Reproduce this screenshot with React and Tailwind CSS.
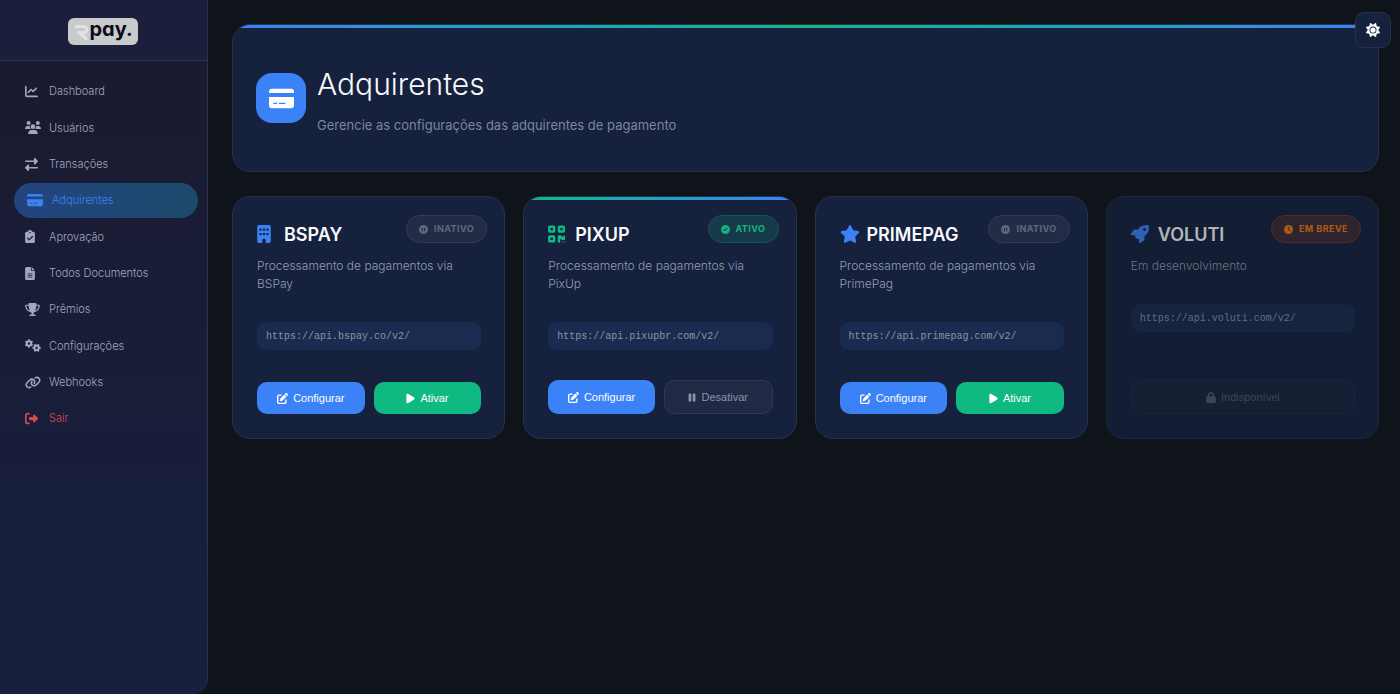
import {
  FaBuilding,
  FaChartLine,
  FaCircleCheck,
  FaCirclePause,
  FaClipboardCheck,
  FaClock,
  FaCreditCard,
  FaFileLines,
  FaGears,
  FaLink,
  FaLock,
  FaPause,
  FaPenToSquare,
  FaPlay,
  FaQrcode,
  FaRightFromBracket,
  FaRightLeft,
  FaRocket,
  FaStar,
  FaSun,
  FaTrophy,
  FaUsers,
} from "react-icons/fa6";
import clsx from "clsx";

const menu = [
  { label: "Dashboard", icon: FaChartLine, size: "size-[13px]" },
  { label: "Usuários", icon: FaUsers, size: "h-[13px] w-4" },
  { label: "Transações", icon: FaRightLeft, size: "size-[13px]" },
  { label: "Adquirentes", icon: FaCreditCard, size: "h-[14px] w-4", active: true },
  { label: "Aprovação", icon: FaClipboardCheck, size: "h-[13px] w-2.5" },
  { label: "Todos Documentos", icon: FaFileLines, size: "h-[13px] w-2.5" },
  { label: "Prêmios", icon: FaTrophy, size: "h-[13px] w-[15px]" },
  { label: "Configurações", icon: FaGears, size: "h-[13px] w-4" },
  { label: "Webhooks", icon: FaLink, size: "h-[13px] w-4" },
  { label: "Sair", icon: FaRightFromBracket, size: "size-[13px]", danger: true },
];

const acquirers = [
  {
    name: "BSPAY",
    icon: FaBuilding,
    size: "h-[18px] w-3.5",
    description: "Processamento de pagamentos via BSPay",
    url: "https://api.bspay.co/v2/",
    status: "inactive",
  },
  {
    name: "PIXUP",
    icon: FaQrcode,
    size: "h-5 w-[17px]",
    description: "Processamento de pagamentos via PixUp",
    url: "https://api.pixupbr.com/v2/",
    status: "active",
  },
  {
    name: "PRIMEPAG",
    icon: FaStar,
    size: "h-[18px] w-5",
    description: "Processamento de pagamentos via PrimePag",
    url: "https://api.primepag.com/v2/",
    status: "inactive",
  },
  {
    name: "VOLUTI",
    icon: FaRocket,
    size: "size-[18px]",
    description: "Em desenvolvimento",
    url: "https://api.voluti.com/v2/",
    status: "soon",
  },
];

const badges = {
  inactive: {
    label: "INATIVO",
    icon: FaCirclePause,
    style: "bg-[#232c47] border-[#343d55] text-[#5f687c]",
  },
  active: {
    label: "ATIVO",
    icon: FaCircleCheck,
    style: "bg-[#163a4a] border-[#165451] text-[#12b481]",
  },
  soon: {
    label: "EM BREVE",
    icon: FaClock,
    style: "bg-[#3b2c37] border-[#6b3a2c] text-[#f0761a]",
  },
};

const Logo = () => (
  <a
    href="#"
    aria-label="Rpay"
    className="flex h-[27px] w-[70px] items-center rounded-md bg-[#c9cacb] pl-1.5"
  >
    <svg viewBox="0 0 16 17" className="mt-0.5 h-[17px] w-4 shrink-0" fill="none" stroke="#e2e2e3" strokeWidth="3">
      <path d="M1 2.500h9a3 3 0 0 1 0 6H3" />
      <path d="M5 8.500 13 15.500" />
    </svg>
    <span className="-mt-1 text-[20px] leading-6 font-bold text-[#0b0a1e] [font-feature-settings:'cv11','ss03']">
      pay.
    </span>
  </a>
);

const Sidebar = () => (
  <aside className="w-52 shrink-0 overflow-hidden rounded-br-2xl border-r border-[#2a3350] bg-linear-to-b from-[#1a1a2e] via-[#191d38] to-[#16213e]">
    <div className="flex h-[61px] items-center justify-center border-b border-[#2a3350] bg-[#1c1f3b] pt-0.5 pr-0.5">
      <Logo />
    </div>
    <nav className="mt-[13px] flex h-[362px] flex-col justify-between">
      {menu.map(({ label, icon: Icon, size, active, danger }) => (
        <a
          key={label}
          href="#"
          className={clsx(
            "flex h-[35px] items-center rounded-full text-[11px] font-light",
            active
              ? "mr-[9px] ml-3.5 bg-linear-to-r from-[#234480] to-[#1c4a6c] pl-[13px] text-[#3b82f6]"
              : "mx-3 pl-[13px]",
            danger && "text-[#d94a4c]",
            !active && !danger && "text-[#a0a8ba]"
          )}
        >
          <span className={active ? "w-[25px] shrink-0" : "w-6 shrink-0"}>
            <Icon className={size} />
          </span>
          {label}
        </a>
      ))}
    </nav>
  </aside>
);

const Badge = ({ status }) => {
  const { label, icon: Icon, style } = badges[status];
  return (
    <span
      className={clsx(
        "absolute top-[18px] right-[17px] flex h-7 items-center gap-1.5 rounded-full border px-3 text-[9px] font-bold tracking-wider",
        style
      )}
    >
      <Icon className="size-[9px]" />
      {label}
    </span>
  );
};

const button =
  "flex flex-1 items-center justify-center gap-[5px] rounded-[10px] py-2 font-['Liberation_Sans',sans-serif] text-[11px] leading-4";

const Actions = ({ status }) => {
  if (status === "soon") {
    return (
      <button disabled className={clsx(button, "border border-[#222d47] bg-[#1a2540] text-[#525b6e]")}>
        <FaLock className="h-[11px] w-2.5" />
        Indisponível
      </button>
    );
  }

  return (
    <>
      <button className={clsx(button, "bg-[#3b82f6] text-white")}>
        <FaPenToSquare className="size-[11px]" />
        Configurar
      </button>
      {status === "active" ? (
        <button className={clsx(button, "border border-[#2f3951] bg-[#202a45] text-[#8b93a7]")}>
          <FaPause className="h-[11px] w-2" />
          Desativar
        </button>
      ) : (
        <button className={clsx(button, "bg-[#10b981] text-white")}>
          <FaPlay className="h-[11px] w-[9px]" />
          Ativar
        </button>
      )}
    </>
  );
};

const AcquirerCard = ({ name, icon: Icon, size, description, url, status }) => {
  const soon = status === "soon";
  const active = status === "active";

  return (
    <article
      className={clsx(
        "relative flex min-h-[243px] flex-col overflow-hidden rounded-[18px] border border-[#27324c] bg-[#16213e] pt-[23px] pr-[23px] pb-6 pl-6",
        soon && "opacity-70"
      )}
    >
      {active && (
        <div className="absolute inset-x-0 top-0 h-[3px] bg-linear-to-r from-[#10b981] to-[#3b82f6]" />
      )}
      <Badge status={status} />
      <h2 className="flex h-7 items-center text-[18px] font-semibold text-slate-50">
        <span className={clsx("w-[27px] shrink-0", active ? "text-[#10b981]" : "text-[#3b82f6]")}>
          <Icon className={size} />
        </span>
        {name}
      </h2>
      <p className="mt-[9px] text-[12px] leading-[18px] font-light text-[#959db0]">{description}</p>
      <code className="mt-[29px] block h-7 rounded-[9px] bg-[#192b50] px-[9px] font-['Liberation_Mono',monospace] text-[10px] leading-[30px] text-[#8b93a7]">
        {url}
      </code>
      <div className="mt-auto flex gap-[9px]">
        <Actions status={status} />
      </div>
    </article>
  );
};

export default function App() {
  return (
    <div className="flex min-h-screen bg-[#0e141a] font-['Inter',sans-serif]">
      <Sidebar />

      <main className="min-w-0 flex-1 py-6 pr-[21px] pl-6">
        <header className="relative flex h-[148px] items-center gap-[11px] overflow-hidden rounded-[18px] border border-[#27324c] bg-[#16213e] px-[23px]">
          <div className="absolute inset-x-0 top-0 h-[3px] bg-linear-to-r from-[#3b82f6] via-[#10b981] to-[#3b82f6]" />
          <div className="flex size-[50px] items-center justify-center rounded-2xl bg-[#3b82f6]">
            <FaCreditCard className="size-[25px] text-white" />
          </div>
          <div className="pt-0.5">
            <h1 className="text-[30px] leading-10 font-light text-slate-50">Adquirentes</h1>
            <p className="mt-[11px] text-[13px] leading-5 text-[#7d869b]">
              Gerencie as configurações das adquirentes de pagamento
            </p>
          </div>
        </header>

        <section className="mt-6 grid grid-cols-4 gap-[18px]">
          {acquirers.map((item) => (
            <AcquirerCard key={item.name} {...item} />
          ))}
        </section>
      </main>

      {/* floating theme toggle */}
      <button
        aria-label="Alternar tema"
        className="fixed top-3 right-[9px] flex size-9 items-center justify-center rounded-[9px] border border-[#27324c] bg-[#16213e] text-white"
      >
        <FaSun className="size-3.5" />
      </button>
    </div>
  );
}
